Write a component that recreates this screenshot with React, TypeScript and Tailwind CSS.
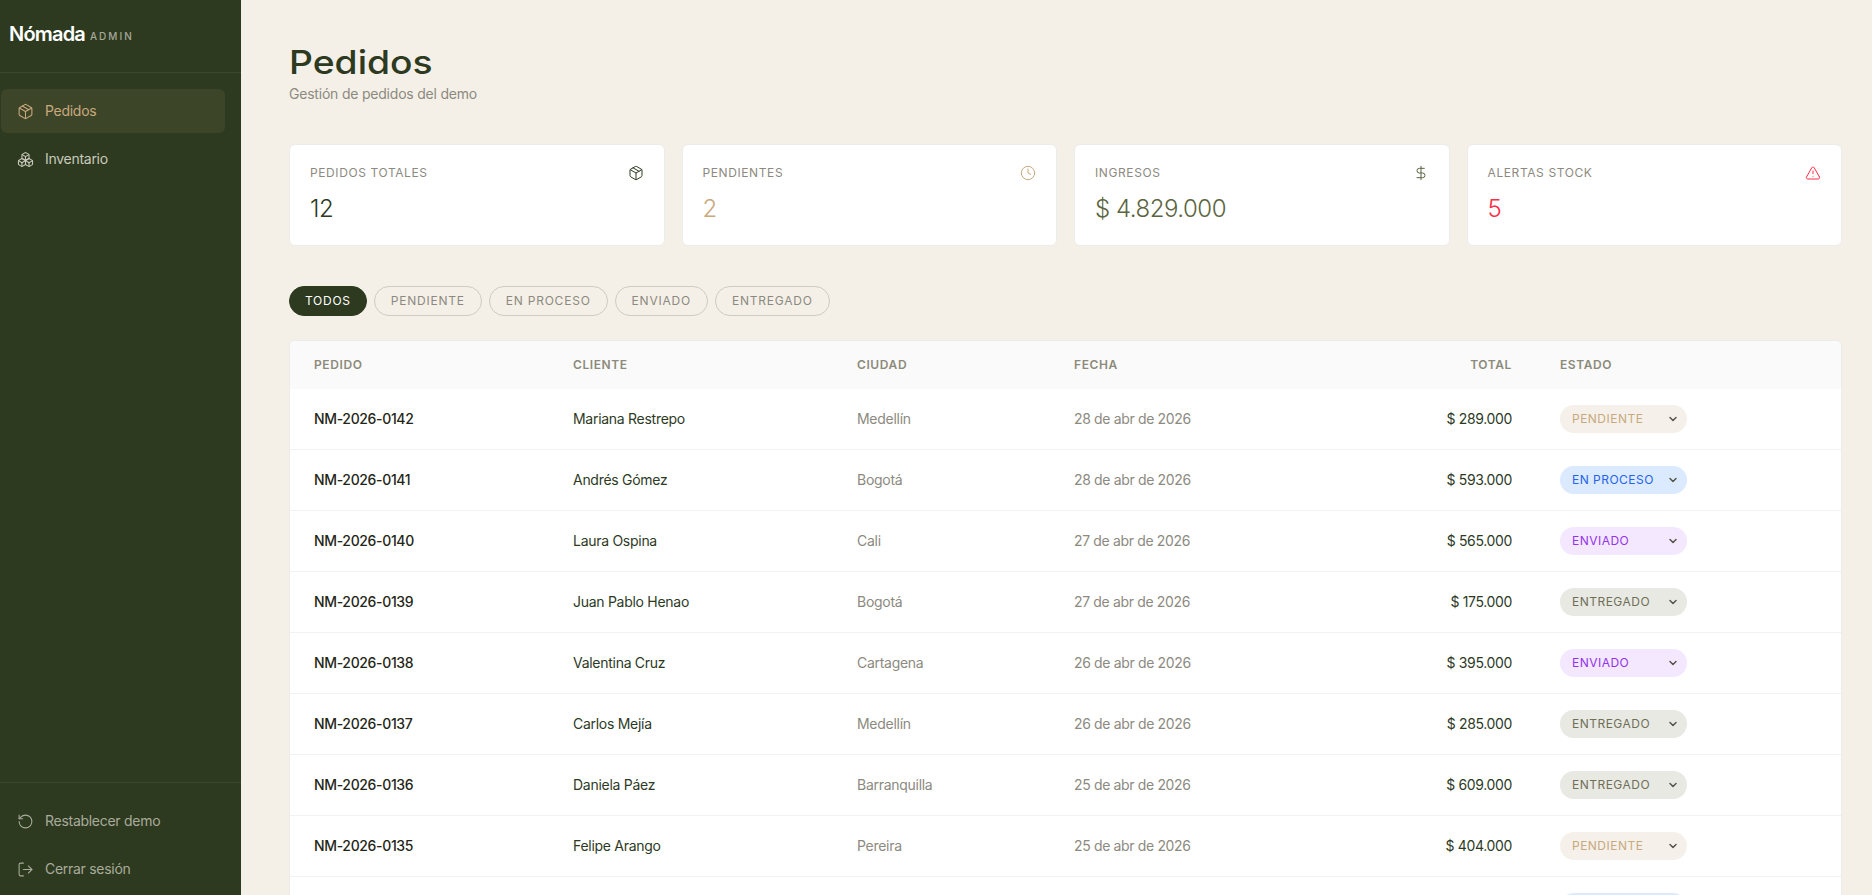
import React from "react";
import {
  Boxes,
  ChevronDown,
  Clock,
  DollarSign,
  LogOut,
  Package,
  RotateCcw,
  TriangleAlert,
} from "lucide-react";

type Status = "PENDIENTE" | "EN PROCESO" | "ENVIADO" | "ENTREGADO";

const orders: { id: string; client: string; city: string; date: string; total: string; status: Status }[] = [
  { id: "NM-2026-0142", client: "Mariana Restrepo", city: "Medellín", date: "28 de abr de 2026", total: "$ 289.000", status: "PENDIENTE" },
  { id: "NM-2026-0141", client: "Andrés Gómez", city: "Bogotá", date: "28 de abr de 2026", total: "$ 593.000", status: "EN PROCESO" },
  { id: "NM-2026-0140", client: "Laura Ospina", city: "Cali", date: "27 de abr de 2026", total: "$ 565.000", status: "ENVIADO" },
  { id: "NM-2026-0139", client: "Juan Pablo Henao", city: "Bogotá", date: "27 de abr de 2026", total: "$ 175.000", status: "ENTREGADO" },
  { id: "NM-2026-0138", client: "Valentina Cruz", city: "Cartagena", date: "26 de abr de 2026", total: "$ 395.000", status: "ENVIADO" },
  { id: "NM-2026-0137", client: "Carlos Mejía", city: "Medellín", date: "26 de abr de 2026", total: "$ 285.000", status: "ENTREGADO" },
  { id: "NM-2026-0136", client: "Daniela Páez", city: "Barranquilla", date: "25 de abr de 2026", total: "$ 609.000", status: "ENTREGADO" },
  { id: "NM-2026-0135", client: "Felipe Arango", city: "Pereira", date: "25 de abr de 2026", total: "$ 404.000", status: "PENDIENTE" },
  { id: "NM-2026-0134", client: "Camila Torres", city: "Bogotá", date: "24 de abr de 2026", total: "$ 320.000", status: "EN PROCESO" },
];

const statusStyles: Record<Status, string> = {
  PENDIENTE: "bg-[#f5f1ea] text-[#c8a97e]",
  "EN PROCESO": "bg-[#dbeafe] text-[#2563eb]",
  ENVIADO: "bg-[#f3e8ff] text-[#9333ea]",
  ENTREGADO: "bg-[#e8e9e3] text-[#6f6f58]",
};

const stats = [
  { label: "PEDIDOS TOTALES", value: "12", valueClass: "text-[#2d3a1f]", icon: <Package size={16} strokeWidth={1.5} className="text-[#2d3a1f]" /> },
  { label: "PENDIENTES", value: "2", valueClass: "text-[#c8a97e]", icon: <Clock size={16} strokeWidth={1.5} className="text-[#c8a97e]" /> },
  { label: "INGRESOS", value: "$ 4.829.000", valueClass: "text-[#5c6440]", icon: <DollarSign size={16} strokeWidth={1.5} className="text-[#5c6440]" /> },
  { label: "ALERTAS STOCK", value: "5", valueClass: "text-[#fb2c46]", icon: <TriangleAlert size={16} strokeWidth={1.5} className="text-[#fb2c46]" /> },
];

const filters = ["TODOS", "PENDIENTE", "EN PROCESO", "ENVIADO", "ENTREGADO"];

const App = () => {
  return (
    <div className="flex h-[895px] overflow-hidden bg-[#f4f0e8] font-['Inter',sans-serif] text-[#2d3a1f]">
      <aside className="flex w-[241px] shrink-0 flex-col bg-[#2d3a1f]">
        <div className="flex h-[73px] items-center gap-[5px] border-b border-[#3c4829] pb-1 pl-[9px]">
          <span className="text-[20px] font-semibold tracking-[-0.04em] text-white">Nómada</span>
          <span className="mt-[5px] text-[10px] font-medium tracking-[0.2em] text-[#a6a89a]">ADMIN</span>
        </div>
        <nav className="mt-4 flex flex-col gap-1 pl-px">
          <a className="flex h-11 w-[224px] items-center gap-[11px] rounded-md bg-[#3d4529] pl-4 text-sm tracking-[-0.02em] text-[#c8a97e]">
            <Package size={17} strokeWidth={1.5} />
            Pedidos
          </a>
          <a className="flex h-11 w-[224px] items-center gap-[11px] rounded-md pl-4 text-sm tracking-[-0.02em] text-[#c9c9bd]">
            <Boxes size={17} strokeWidth={1.5} />
            Inventario
          </a>
        </nav>
        <div className="mt-auto flex flex-col gap-1 border-t border-[#3c4829] pl-px pt-4 pb-1">
          <a className="flex h-11 items-center gap-[11px] pl-4 text-sm tracking-[-0.02em] text-[#a9ab9c]">
            <RotateCcw size={17} strokeWidth={1.5} />
            Restablecer demo
          </a>
          <a className="flex h-11 items-center gap-[11px] pl-4 text-sm tracking-[-0.02em] text-[#a9ab9c]">
            <LogOut size={17} strokeWidth={1.5} />
            Cerrar sesión
          </a>
        </div>
      </aside>

      <main className="min-w-0 flex-1 pt-10 pr-[30px] pl-12">
        <h1 className="origin-left scale-x-[1.13] text-[33px] leading-[44px] font-medium text-[#2d3a1f]">Pedidos</h1>
        <p className="text-sm leading-5 tracking-[-0.015em] text-[#8c8a80]">Gestión de pedidos del demo</p>

        <div className="mt-10 grid grid-cols-4 gap-[17px]">
          {stats.map((stat) => (
            <div key={stat.label} className="h-[102px] rounded-md border border-[#ececea] bg-white px-5 pt-5">
              <div className="flex h-4 items-center justify-between">
                <span className="text-xs tracking-[0.05em] text-[#8c8a80]">{stat.label}</span>
                {stat.icon}
              </div>
              <div className={`mt-3 text-2xl leading-8 font-light tracking-[-0.02em] ${stat.valueClass}`}>{stat.value}</div>
            </div>
          ))}
        </div>

        <div className="mt-10 flex gap-[7px]">
          {filters.map((filter, i) => (
            <button
              key={filter}
              className={
                i === 0
                  ? "h-[30px] rounded-full border border-[#2d3a1f] bg-[#2d3a1f] px-[15px] text-xs tracking-[0.06em] text-white"
                  : "h-[30px] rounded-full border border-[#cfcbc0] px-4 text-xs tracking-[0.065em] text-[#8c8a80]"
              }
            >
              {filter}
            </button>
          ))}
        </div>

        <div className="mt-6 overflow-hidden rounded-md border border-[#ececea] bg-white">
          <table className="w-full table-fixed border-separate border-spacing-0 text-sm tracking-tight">
            <colgroup>
              <col className="w-[259px]" />
              <col className="w-[284px]" />
              <col className="w-[217px]" />
              <col className="w-[300px]" />
              <col className="w-[186px]" />
              <col />
            </colgroup>
            <thead className="bg-[#fafafa]">
              <tr className="h-12 text-left text-xs tracking-[0.05em] text-[#8c8a7a]">
                <th className="pl-6 font-semibold">PEDIDO</th>
                <th className="pl-6 font-semibold">CLIENTE</th>
                <th className="pl-6 font-semibold">CIUDAD</th>
                <th className="pl-6 font-semibold">FECHA</th>
                <th className="pr-6 text-right font-semibold">TOTAL</th>
                <th className="pl-6 font-semibold">ESTADO</th>
              </tr>
            </thead>
            <tbody>
              {orders.map((order) => (
                <tr key={order.id} className="h-[61px]">
                  <td className="border-b border-[#f2f2f0] pl-6 font-medium text-[#1f2616]">{order.id}</td>
                  <td className="border-b border-[#f2f2f0] pl-6 tracking-[-0.02em] text-[#2d3a1f]">{order.client}</td>
                  <td className="border-b border-[#f2f2f0] pl-6 tracking-[-0.02em] text-[#8c8a80]">{order.city}</td>
                  <td className="border-b border-[#f2f2f0] pl-6 text-[#8c8a80]">{order.date}</td>
                  <td className="border-b border-[#f2f2f0] pr-6 text-right text-[#2d3a1f]">{order.total}</td>
                  <td className="border-b border-[#f2f2f0] pl-6">
                    <div className={`flex h-7 w-[127px] items-center justify-between rounded-full pr-2 pl-3 text-xs tracking-[0.04em] ${statusStyles[order.status]}`}>
                      {order.status}
                      <ChevronDown size={12} strokeWidth={3} className="text-[#55554a]" />
                    </div>
                  </td>
                </tr>
              ))}
            </tbody>
          </table>
        </div>
      </main>
    </div>
  );
};

export default App;
